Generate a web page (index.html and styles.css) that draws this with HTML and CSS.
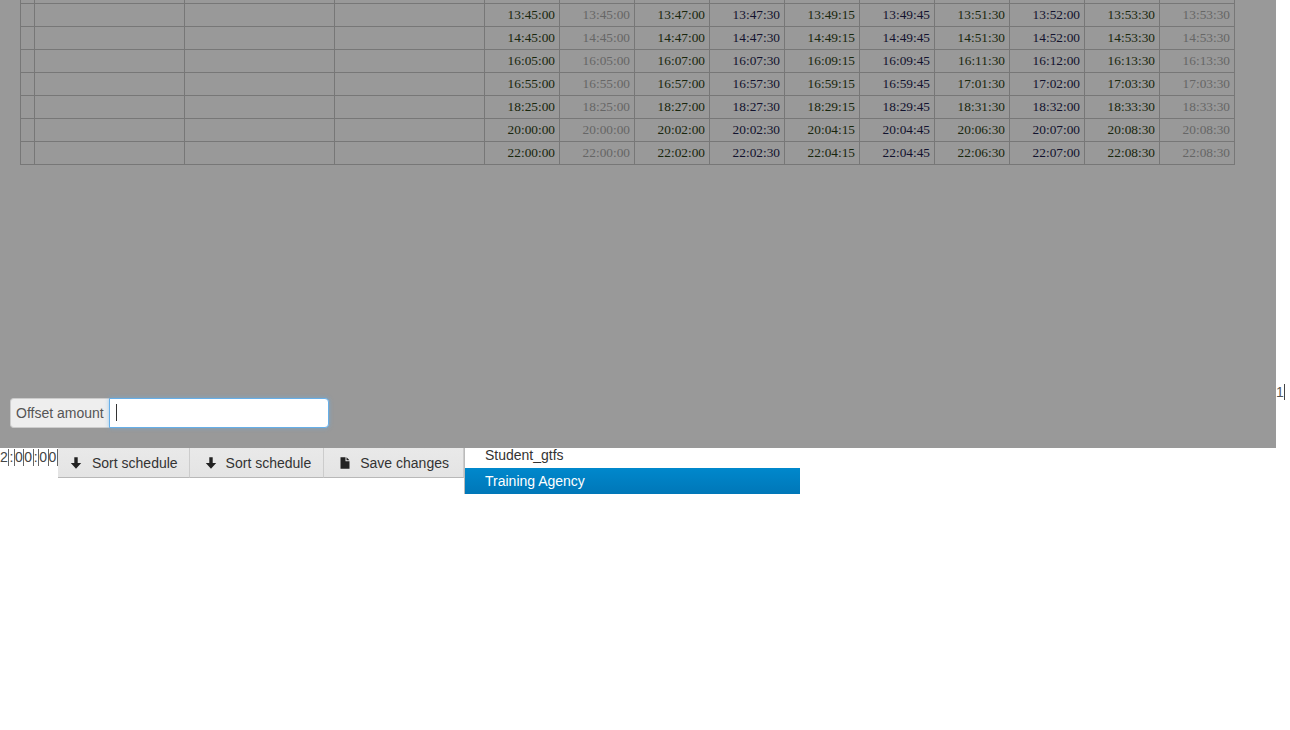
FILE: index.html
```html
<!DOCTYPE HTML>
<html>
<head>
    <title>Schedule Editor</title>
    <meta name="viewport" content="width=device-width, initial-scale=1">
    <link rel="stylesheet" href="styles.css">
</head>
<body>
    <div class="top">
        <!-- backdrop with the schedule behind it -->
        <div class="backdrop">
            <table class="schedule">
                <colgroup>
                    <col class="c-num"><col class="c-wide"><col class="c-wide"><col class="c-wide">
                    <col class="c-time"><col class="c-time"><col class="c-time"><col class="c-time"><col class="c-time">
                    <col class="c-time"><col class="c-time"><col class="c-time"><col class="c-time"><col class="c-time">
                </colgroup>
                <tbody id="rows"></tbody>
            </table>
            <div class="offset">
                <span class="addon">Offset amount</span>
                <div class="field"><span class="caret"></span></div>
            </div>
        </div>
        <div class="side"><span>1</span><span class="bar"></span></div>
    </div>

    <div class="bottom">
        <div class="clock">
            <span>2</span><span class="bar"></span><span>:</span><span class="bar"></span><span>0</span><span class="bar"></span><span>0</span><span class="bar"></span><span>:</span><span class="bar"></span><span>0</span><span class="bar"></span><span>0</span><span class="bar"></span>
        </div>
        <div class="btns">
            <button class="btn btn-1" type="button">
                <svg class="ico" viewBox="0 0 12 12"><path d="M4.300 .2h3.400v5.700h3.500L6 11.800 .8 5.900h3.500z"/></svg>
                Sort schedule
            </button>
            <button class="btn btn-2" type="button">
                <svg class="ico" viewBox="0 0 12 12"><path d="M4.300 .2h3.400v5.700h3.500L6 11.800 .8 5.900h3.500z"/></svg>
                Sort schedule
            </button>
            <button class="btn btn-3" type="button">
                <svg class="ico" viewBox="0 0 12 12"><path d="M1.500 .3h5v4h4v7.400h-9zM7.500 .3l3 3h-3z"/></svg>
                Save changes
            </button>
        </div>
        <ul class="agencies">
            <li>Student_gtfs</li>
            <li class="active">Training Agency</li>
        </ul>
    </div>

    <script>
        let times = [
            ["13:45:00","13:47:00","13:47:30","13:49:15","13:49:45","13:51:30","13:52:00","13:53:30"],
            ["14:45:00","14:47:00","14:47:30","14:49:15","14:49:45","14:51:30","14:52:00","14:53:30"],
            ["16:05:00","16:07:00","16:07:30","16:09:15","16:09:45","16:11:30","16:12:00","16:13:30"],
            ["16:55:00","16:57:00","16:57:30","16:59:15","16:59:45","17:01:30","17:02:00","17:03:30"],
            ["18:25:00","18:27:00","18:27:30","18:29:15","18:29:45","18:31:30","18:32:00","18:33:30"],
            ["20:00:00","20:02:00","20:02:30","20:04:15","20:04:45","20:06:30","20:07:00","20:08:30"],
            ["22:00:00","22:02:00","22:02:30","22:04:15","22:04:45","22:06:30","22:07:00","22:08:30"]
        ];
        let tints = ["g", "b", "g", "b", "g", "b", "g"];

        function cell(text, cls) {
            return `<td class="${cls}">${text}</td>`;
        }

        let html = "<tr class=\"stub\">" + "<td></td>".repeat(14) + "</tr>";
        times.forEach(function (row) {
            html += "<tr>" + "<td></td>".repeat(4);
            // first and last stops are shown twice, the copy is greyed out
            html += cell(row[0], "g") + cell(row[0], "dim");
            row.slice(1).forEach(function (t, i) {
                html += cell(t, tints[i]);
            });
            html += cell(row[7], "dim") + "</tr>";
        });
        document.getElementById("rows").innerHTML = html;
    </script>
</body>
</html>
```

FILE: styles.css
```css
html, body {margin: 0; padding: 0; background: #fff;}
body {font-family: "Liberation Sans", Arial, sans-serif; font-size: 14px; color: #333; height: 730px; overflow: hidden;}

.top {display: flex; height: 448px;}
.backdrop {width: 1276px; flex: none; background: #999; overflow: hidden;}

.schedule {border-collapse: collapse; table-layout: fixed; width: 1215px; margin: -20px 0 0 20px; font-family: "Liberation Serif", "Times New Roman", serif; font-size: 13.33px;}
.schedule td {border: 1px solid #777; height: 20px; padding: 0 4px 2px; text-align: right; box-sizing: content-box; line-height: 15px;}
.c-num {width: 14px;}
.c-wide {width: 150px;}
.c-time {width: 75px;}
.g {color: #18260c;}
.b {color: #12122e;}
.dim {color: #666;}

.offset {display: flex; width: 319px; height: 30px; margin: 233px 0 0 10px;}
.addon {flex: none; width: 99px; box-sizing: border-box; padding-left: 5px; line-height: 28px; background: #eee; border: 1px solid #ccc; border-right: 0; border-radius: 4px 0 0 4px; color: #555;}
.field {flex: 1; box-sizing: border-box; padding: 5px 6px; background: #fff; border: 1px solid #66afe9; border-radius: 0 4px 4px 0; box-shadow: 0 0 4px rgba(102, 175, 233, .6);}
.caret {display: block; width: 1px; height: 17px; background: #333;}

.side {display: flex; align-items: flex-start; padding-top: 384px; color: #555; line-height: 16px;}
.bar {display: inline-block; width: 1px; height: 16px; background: #444;}

.bottom {display: flex; align-items: flex-start;}
.clock {width: 58px; flex: none; display: flex; align-items: flex-start; line-height: 17px; color: #444; padding-top: 1px; box-sizing: border-box;}
.clock .bar {height: 17px; background: #666; margin-left: .6px;}

.btns {display: flex; width: 406px; flex: none;}
.btn {display: flex; align-items: center; height: 30px; margin: 0; box-sizing: border-box; font: 14px "Liberation Sans", Arial, sans-serif; color: #333; background: linear-gradient(#e9e9e9, #e4e4e4); border: 0; border-right: 1px solid #ccc; border-bottom: 1px solid #b8b8b8;}
.btn-1 {padding: 0 11px 0 12px;}
.btn-2 {padding: 0 12px 0 15px;}
.btn-3 {padding: 0 0 0 15px; flex: 1;}
.ico {width: 12px; height: 12px; fill: #222; margin-right: 10px; flex: none;}
.btn-2 .ico, .btn-3 .ico {margin-right: 9px;}

.agencies {list-style: none; margin: 0; padding: 0; width: 335px; border-left: 1px solid #bbb; height: 46px;}
.agencies li {padding-left: 20px; height: 20px; line-height: 15px; color: #333;}
.agencies li.active {height: 26px; line-height: 26px; color: #fff; background: linear-gradient(#0088cc, #0077b8);}
```
